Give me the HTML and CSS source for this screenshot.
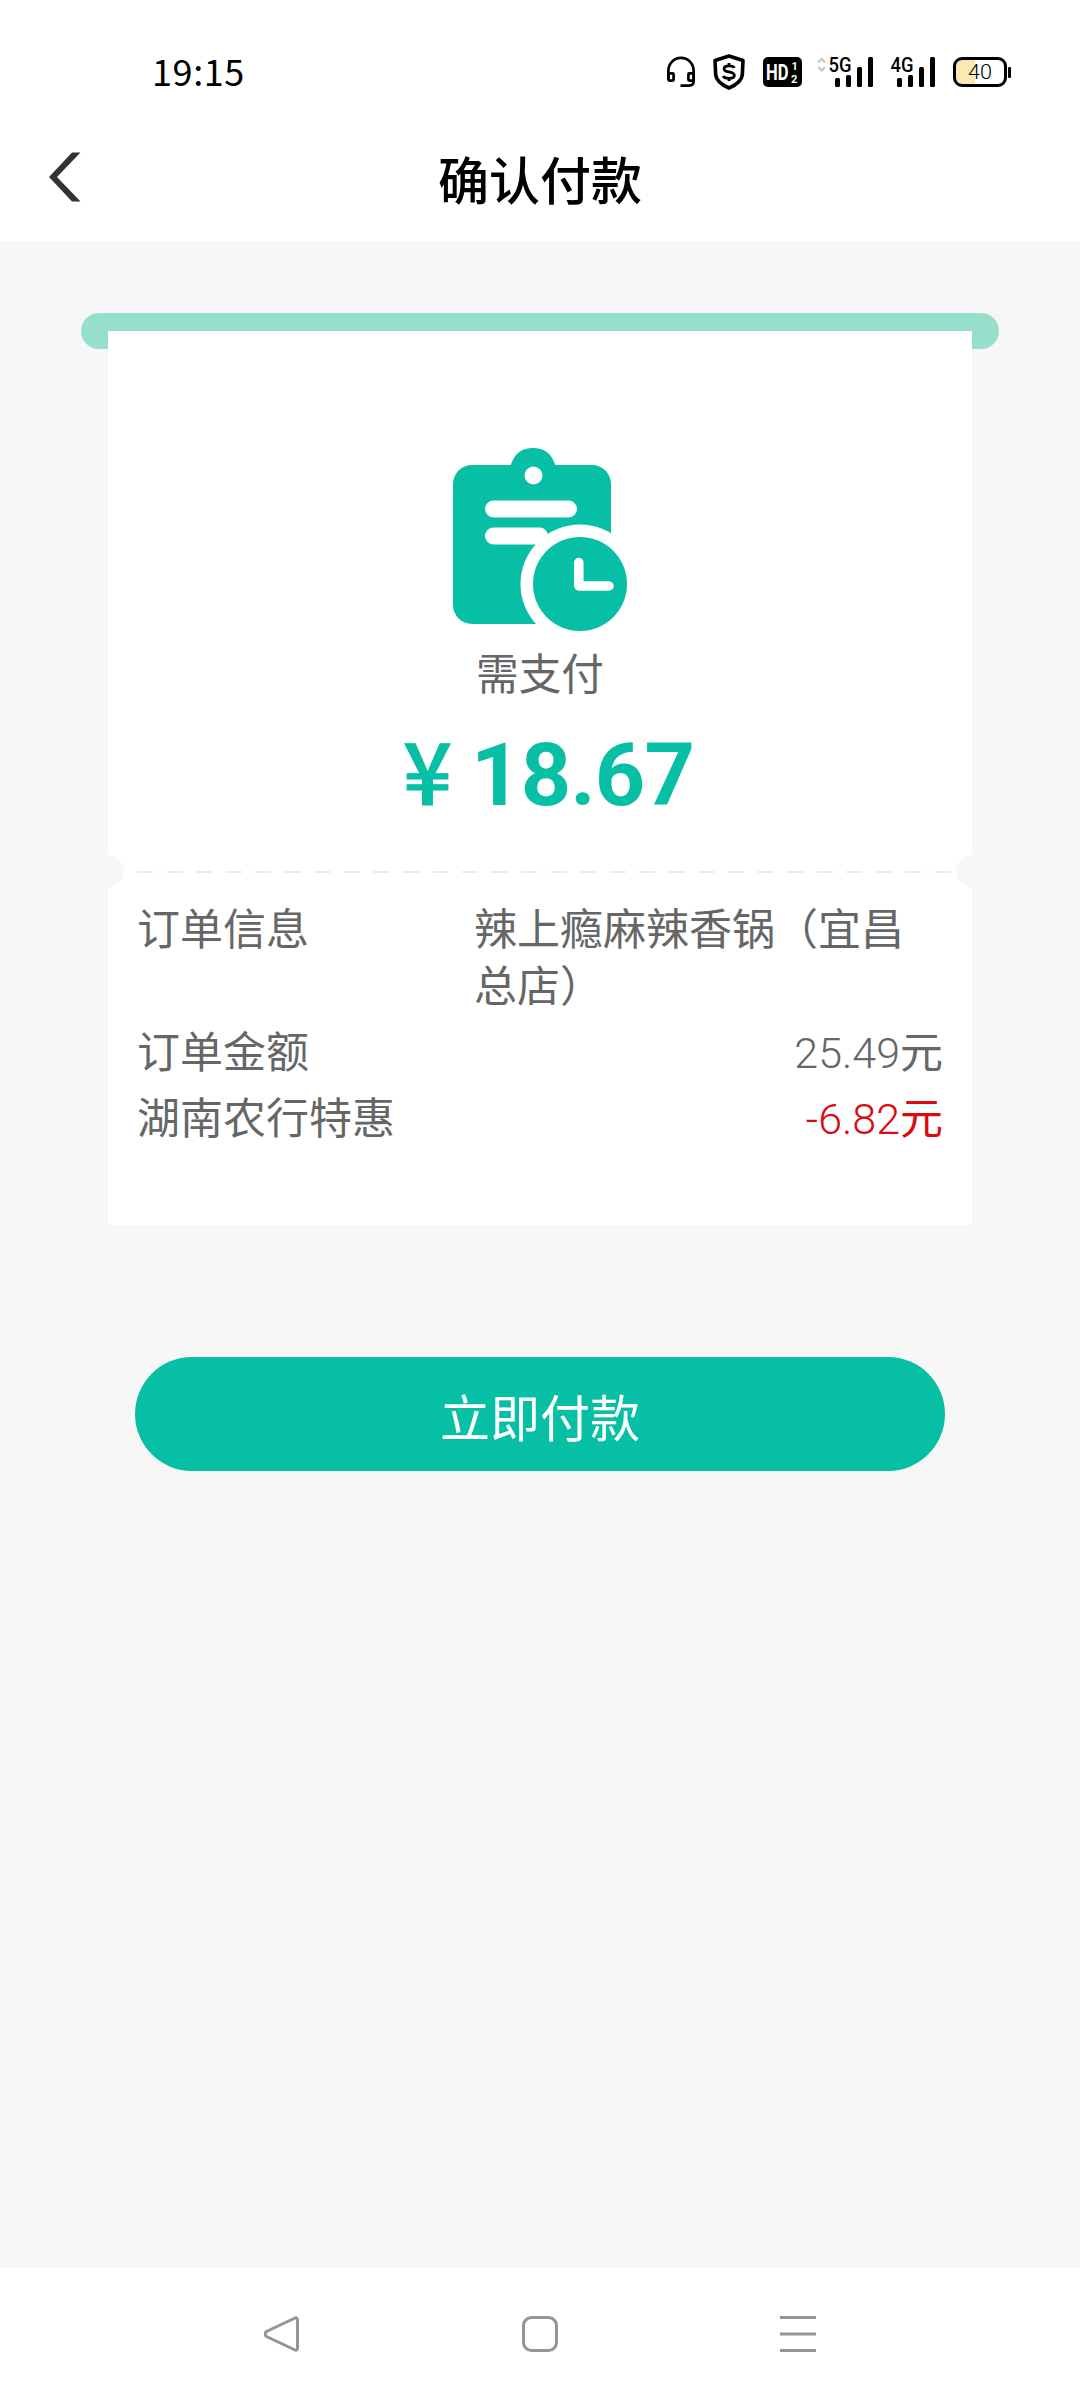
FILE: index.html
```html
<!DOCTYPE html>
<html lang="zh-CN">
<head>
<meta charset="utf-8">
<title>确认付款</title>
<link rel="stylesheet" href="styles.css">
</head>
<body>
<div class="screen">
  <header class="top">
    <div class="status">
      <span class="time">19:15</span>
      <div class="status-icons">
        <svg class="headset" width="28" height="36" viewBox="0 0 28 36" fill="none" stroke="#000" stroke-width="2.7">
          <path d="M1.4 26V16.500A12.6 12.600 0 0 1 26.600 16.500V27Q26.600 31.600 22 31.600H13.500"/>
          <rect x="1.400" y="19.400" width="5.200" height="7.200" rx="1"/>
          <rect x="21.400" y="19.400" width="5.200" height="7.200" rx="1"/>
        </svg>
        <svg class="shield" width="32" height="36" viewBox="0 0 32 36" fill="none" stroke="#000">
          <path d="M16 2L30 6.500L29.300 21Q28.500 28.500 16 34Q3.500 28.500 2.700 21L2 6.500Z" stroke-width="3.600" stroke-linejoin="round"/>
          <path d="M21.300 14Q20.500 11.800 16 11.800Q11 11.800 11 14.700Q11 17 16 17.900Q21.400 19 21.400 21.500Q21.400 24.300 16 24.300Q11 24.300 10.300 22M16 9V11.500M16 24.600V27" stroke-width="2.800"/>
        </svg>
        <svg class="hd" width="39" height="36" viewBox="0 0 39 36">
          <rect y="3" width="39" height="30" rx="5"/>
          <g class="hd-text">
            <text x="3" y="26" font-size="22" textLength="22.500" lengthAdjust="spacingAndGlyphs">HD</text>
            <text x="28.500" y="16" font-size="11">1</text>
            <text x="28" y="28.800" font-size="11">2</text>
          </g>
        </svg>
        <svg class="sig-a" width="56" height="36" viewBox="0 0 56 36">
          <path d="M1.200 8.500L4.600 5L8 8.500M1.200 13L4.600 16.500L8 13" fill="none" stroke="#c8c8c8" stroke-width="2.400"/>
          <text class="net" x="11.500" y="17.500" textLength="23" lengthAdjust="spacingAndGlyphs">5G</text>
          <g><rect x="18" y="24" width="5" height="9" rx="1.500"/><rect x="29" y="21" width="5" height="12" rx="1.500"/><rect x="40" y="13" width="5" height="20" rx="1.500"/><rect x="51" y="3" width="5" height="30" rx="1.500"/></g>
        </svg>
        <svg class="sig-b" width="45" height="36" viewBox="0 0 45 36">
          <text class="net" x="0.500" y="17.500" textLength="23" lengthAdjust="spacingAndGlyphs">4G</text>
          <g><rect x="7" y="24" width="5" height="9" rx="1.500"/><rect x="18" y="21" width="5" height="12" rx="1.500"/><rect x="29" y="13" width="5" height="20" rx="1.500"/><rect x="40" y="3" width="5" height="30" rx="1.500"/></g>
        </svg>
        <svg class="battery" width="58" height="36" viewBox="0 0 58 36">
          <path d="M22 5H9Q2 5 2 12V24Q2 31 9 31H22Z" fill="#fce8b2"/>
          <rect x="1.500" y="4.500" width="51" height="27" rx="7.500" fill="none" stroke="#000" stroke-width="3"/>
          <rect x="55" y="13" width="3" height="11" rx="1"/>
          <text class="level" x="15" y="25.300" textLength="24" lengthAdjust="spacingAndGlyphs">40</text>
        </svg>
      </div>
    </div>
    <div class="titlebar">
      <svg class="back" width="32" height="50" viewBox="0 0 32 50"><path d="M23 0.500H31.500L8 25L31.500 49.500H23L0 25Z" fill="#333"/></svg>
      <h1>确认付款</h1>
    </div>
  </header>

  <main>
    <div class="slot"></div>
    <section class="ticket">
      <div class="summary">
        <svg class="clipboard" width="174" height="184" viewBox="0 0 174 184">
          <g fill="#07bfa5">
            <rect y="17" width="158" height="159" rx="19"/>
            <path d="M54 22Q58 17 58.500 15Q64 0 80 0Q96 0 101.500 15Q102 17 106 22Z"/>
          </g>
          <g fill="#fff">
            <circle cx="80.500" cy="27.500" r="9"/>
            <rect x="32" y="52.500" width="92" height="17" rx="8.500"/>
            <rect x="32" y="79.500" width="63" height="17" rx="8.500"/>
            <circle cx="127" cy="136" r="59.500"/>
          </g>
          <circle cx="127" cy="136" r="47" fill="#07bfa5"/>
          <path d="M125.800 114.500V138H156" fill="none" stroke="#fff" stroke-width="9.500" stroke-linecap="round" stroke-linejoin="round"/>
        </svg>
        <p class="caption">需支付</p>
        <p class="amount"><span class="yen">¥</span><span>18.67</span></p>
      </div>
      <div class="tear"><svg width="816" height="2" viewBox="0 0 816 2"><path d="M0 1H816" stroke="#ebebeb" stroke-width="2" stroke-dasharray="16 13.550"/></svg></div>
      <dl class="details">
        <div class="row order"><dt>订单信息</dt><dd>辣上瘾麻辣香锅（宜昌总店）</dd></div>
        <div class="row"><dt>订单金额</dt><dd>25.49<span class="unit">元</span></dd></div>
        <div class="row discount"><dt>湖南农行特惠</dt><dd>-6.82<span class="unit">元</span></dd></div>
      </dl>
    </section>
    <button class="pay" type="button">立即付款</button>
  </main>

  <nav class="sysnav">
    <svg width="36" height="38" viewBox="0 0 36 38"><path d="M30 3.500Q33.500 1.500 33.500 5.500V32.500Q33.500 36.500 30 34.500L2.500 21.500Q-0.500 19 2.500 16.500Z"/></svg>
    <svg width="38" height="38" viewBox="0 0 38 38"><rect x="2.500" y="2.500" width="33" height="33" rx="8"/></svg>
    <svg width="36" height="38" viewBox="0 0 36 38"><path d="M0 2.500H36M0 19H36M0 35.500H36"/></svg>
  </nav>
</div>
</body>
</html>
```

FILE: styles.css
```css
* { box-sizing: border-box; }
body {
  margin: 0;
  background: #f7f7f7;
  font-family: Roboto, "Noto Sans CJK SC", sans-serif;
  color: #666;
}
h1, p, dl, dd { margin: 0; }
svg { display: block; flex: none; }

.screen {
  width: 1080px;
  height: 2400px;
  display: flex;
  flex-direction: column;
}

.top { height: 241px; background: #fff; }
.status {
  height: 108px;
  padding: 36px 69px 0 152px;
  display: flex;
  justify-content: space-between;
  align-items: center;
}
.time {
  margin-bottom: 5px;
  font: 36px/36px "Noto Sans CJK SC", sans-serif;
  letter-spacing: 0.6px;
  color: #000;
}
.status-icons { display: flex; }
.shield { margin-left: 18px; }
.hd { margin-left: 18px; }
.sig-a { margin-left: 15px; }
.sig-b { margin-left: 17px; }
.battery { margin-left: 18px; }
.hd-text { fill: #fff; font-family: Roboto, sans-serif; font-weight: 700; }
.net { font: 500 20px Roboto, sans-serif; }
.level { font: 300 21px Roboto, sans-serif; }

.titlebar {
  height: 133px;
  padding: 0 49px;
  display: grid;
  grid-template-columns: 32px 1fr 32px;
  align-items: center;
}
.back { margin-top: 5px; }
h1 {
  padding-top: 6px;
  text-align: center;
  font: 500 51px/72px "Noto Sans CJK SC", sans-serif;
  color: #000;
}

main {
  flex: 1;
  padding-top: 72px;
  display: flex;
  flex-direction: column;
  align-items: center;
}
.slot { width: 918px; height: 36px; border-radius: 18px; background: #95dfcc; }
.ticket {
  width: 864px;
  height: 894px;
  margin-top: -18px;
  background: radial-gradient(circle at 0 540px, #f7f7f7 15.500px, transparent 16.500px),
    radial-gradient(circle at 864px 540px, #f7f7f7 15.500px, transparent 16.500px), #fff;
}
.summary {
  height: 540px;
  padding-top: 117px;
  display: flex;
  flex-direction: column;
  align-items: center;
}
.caption { margin-top: 11px; font-size: 42.670px; line-height: 64px; }
.amount {
  margin-top: 18px;
  padding-left: 17px;
  display: flex;
  align-items: flex-start;
  gap: 20px;
  font-size: 88px;
  font-weight: 700;
  line-height: 100px;
  letter-spacing: -0.9px;
  color: #07bfa5;
}
.yen {
  font: 500 86px/86px "Noto Sans CJK SC", sans-serif;
  -webkit-text-stroke: 1px #07bfa5;
}
.tear { height: 2px; padding-left: 29px; }

.details { padding: 29px 29px 0 29px; font-size: 43px; }
.row { display: flex; justify-content: space-between; height: 66px; line-height: 57px; }
.row dd { font-weight: 300; }
.row .unit { font-weight: 400; }
.row.order { height: 122.500px; }
.row.order dd { width: 469px; font-weight: 400; }
.row.discount dd { color: #d90b0f; }

.pay {
  width: 810px;
  height: 114px;
  margin-top: 132px;
  padding: 2px 0 0;
  border: 0;
  border-radius: 57px;
  background: #07bfa5;
  font: 50px/112px "Noto Sans CJK SC", sans-serif;
  color: #fff;
}

.sysnav {
  height: 132px;
  padding: 0 264px;
  background: #fff;
  display: flex;
  justify-content: space-between;
  align-items: center;
}
.sysnav svg { fill: none; stroke: #959595; stroke-width: 3px; }
```
